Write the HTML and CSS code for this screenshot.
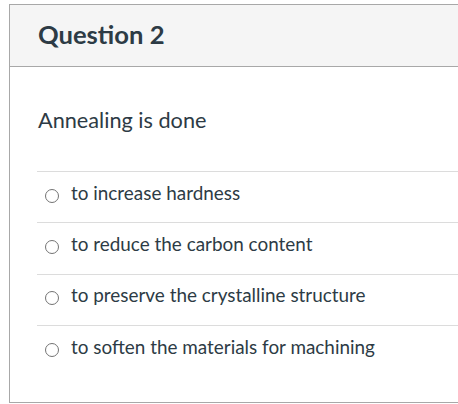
FILE: index.html
```html
<!DOCTYPE html>
<html>
<head>
<meta charset="utf-8">
<link rel="stylesheet" href="styles.css">
</head>
<body>
<div class="card">
  <div class="card-header">
    <h2 class="title">Question 2</h2>
  </div>
  <div class="card-body">
    <p class="question">Annealing is done</p>
    <div class="answers">
      <label class="answer"><span class="radio"></span><span class="answer-text">to increase hardness</span></label>
      <label class="answer"><span class="radio"></span><span class="answer-text">to reduce the carbon content</span></label>
      <label class="answer"><span class="radio"></span><span class="answer-text">to preserve the crystalline structure</span></label>
      <label class="answer"><span class="radio"></span><span class="answer-text">to soften the materials for machining</span></label>
    </div>
  </div>
</div>
</body>
</html>
```
FILE: styles.css
```css
html, body {
  margin: 0;
  padding: 0;
  background: #ffffff;
}
body {
  font-family: Lato, "Open Sans", sans-serif;
  color: #2d3b45;
}
.card {
  margin: 4px 0 0 9px;
  border: 1px solid #a8a8a8;
  border-right: none;
  height: 399px;
  box-sizing: border-box;
}
.card-header {
  height: 62px;
  box-sizing: border-box;
  background: #f5f5f5;
  border-bottom: 1px solid #a8a8a8;
  display: flex;
  align-items: center;
  padding-left: 28px;
  padding-bottom: 4px;
}
.title {
  margin: 0;
  font-size: 25.6px;
  font-weight: 700;
  line-height: 30px;
}
.card-body {
  padding: 40px 0 0 28px;
}
.question {
  margin: 0 0 36px 0;
  font-size: 21.7px;
  line-height: 26px;
  padding-bottom: 2px;
}
.answers {
  display: flex;
  flex-direction: column;
  margin-left: -1px;
}
.answer {
  display: flex;
  align-items: center;
  height: 51.4px;
  box-sizing: border-box;
  border-top: 1px solid #dcdcdc;
  padding-left: 8px;
  padding-bottom: 9px;
  gap: 12px;
  font-size: 18.9px;
}
.radio {
  width: 14px;
  height: 14px;
  box-sizing: border-box;
  border: 1.5px solid #737373;
  border-radius: 50%;
  flex: none;
  margin-top: 6px;
}
.answer-text {
  line-height: 22px;
}
```
